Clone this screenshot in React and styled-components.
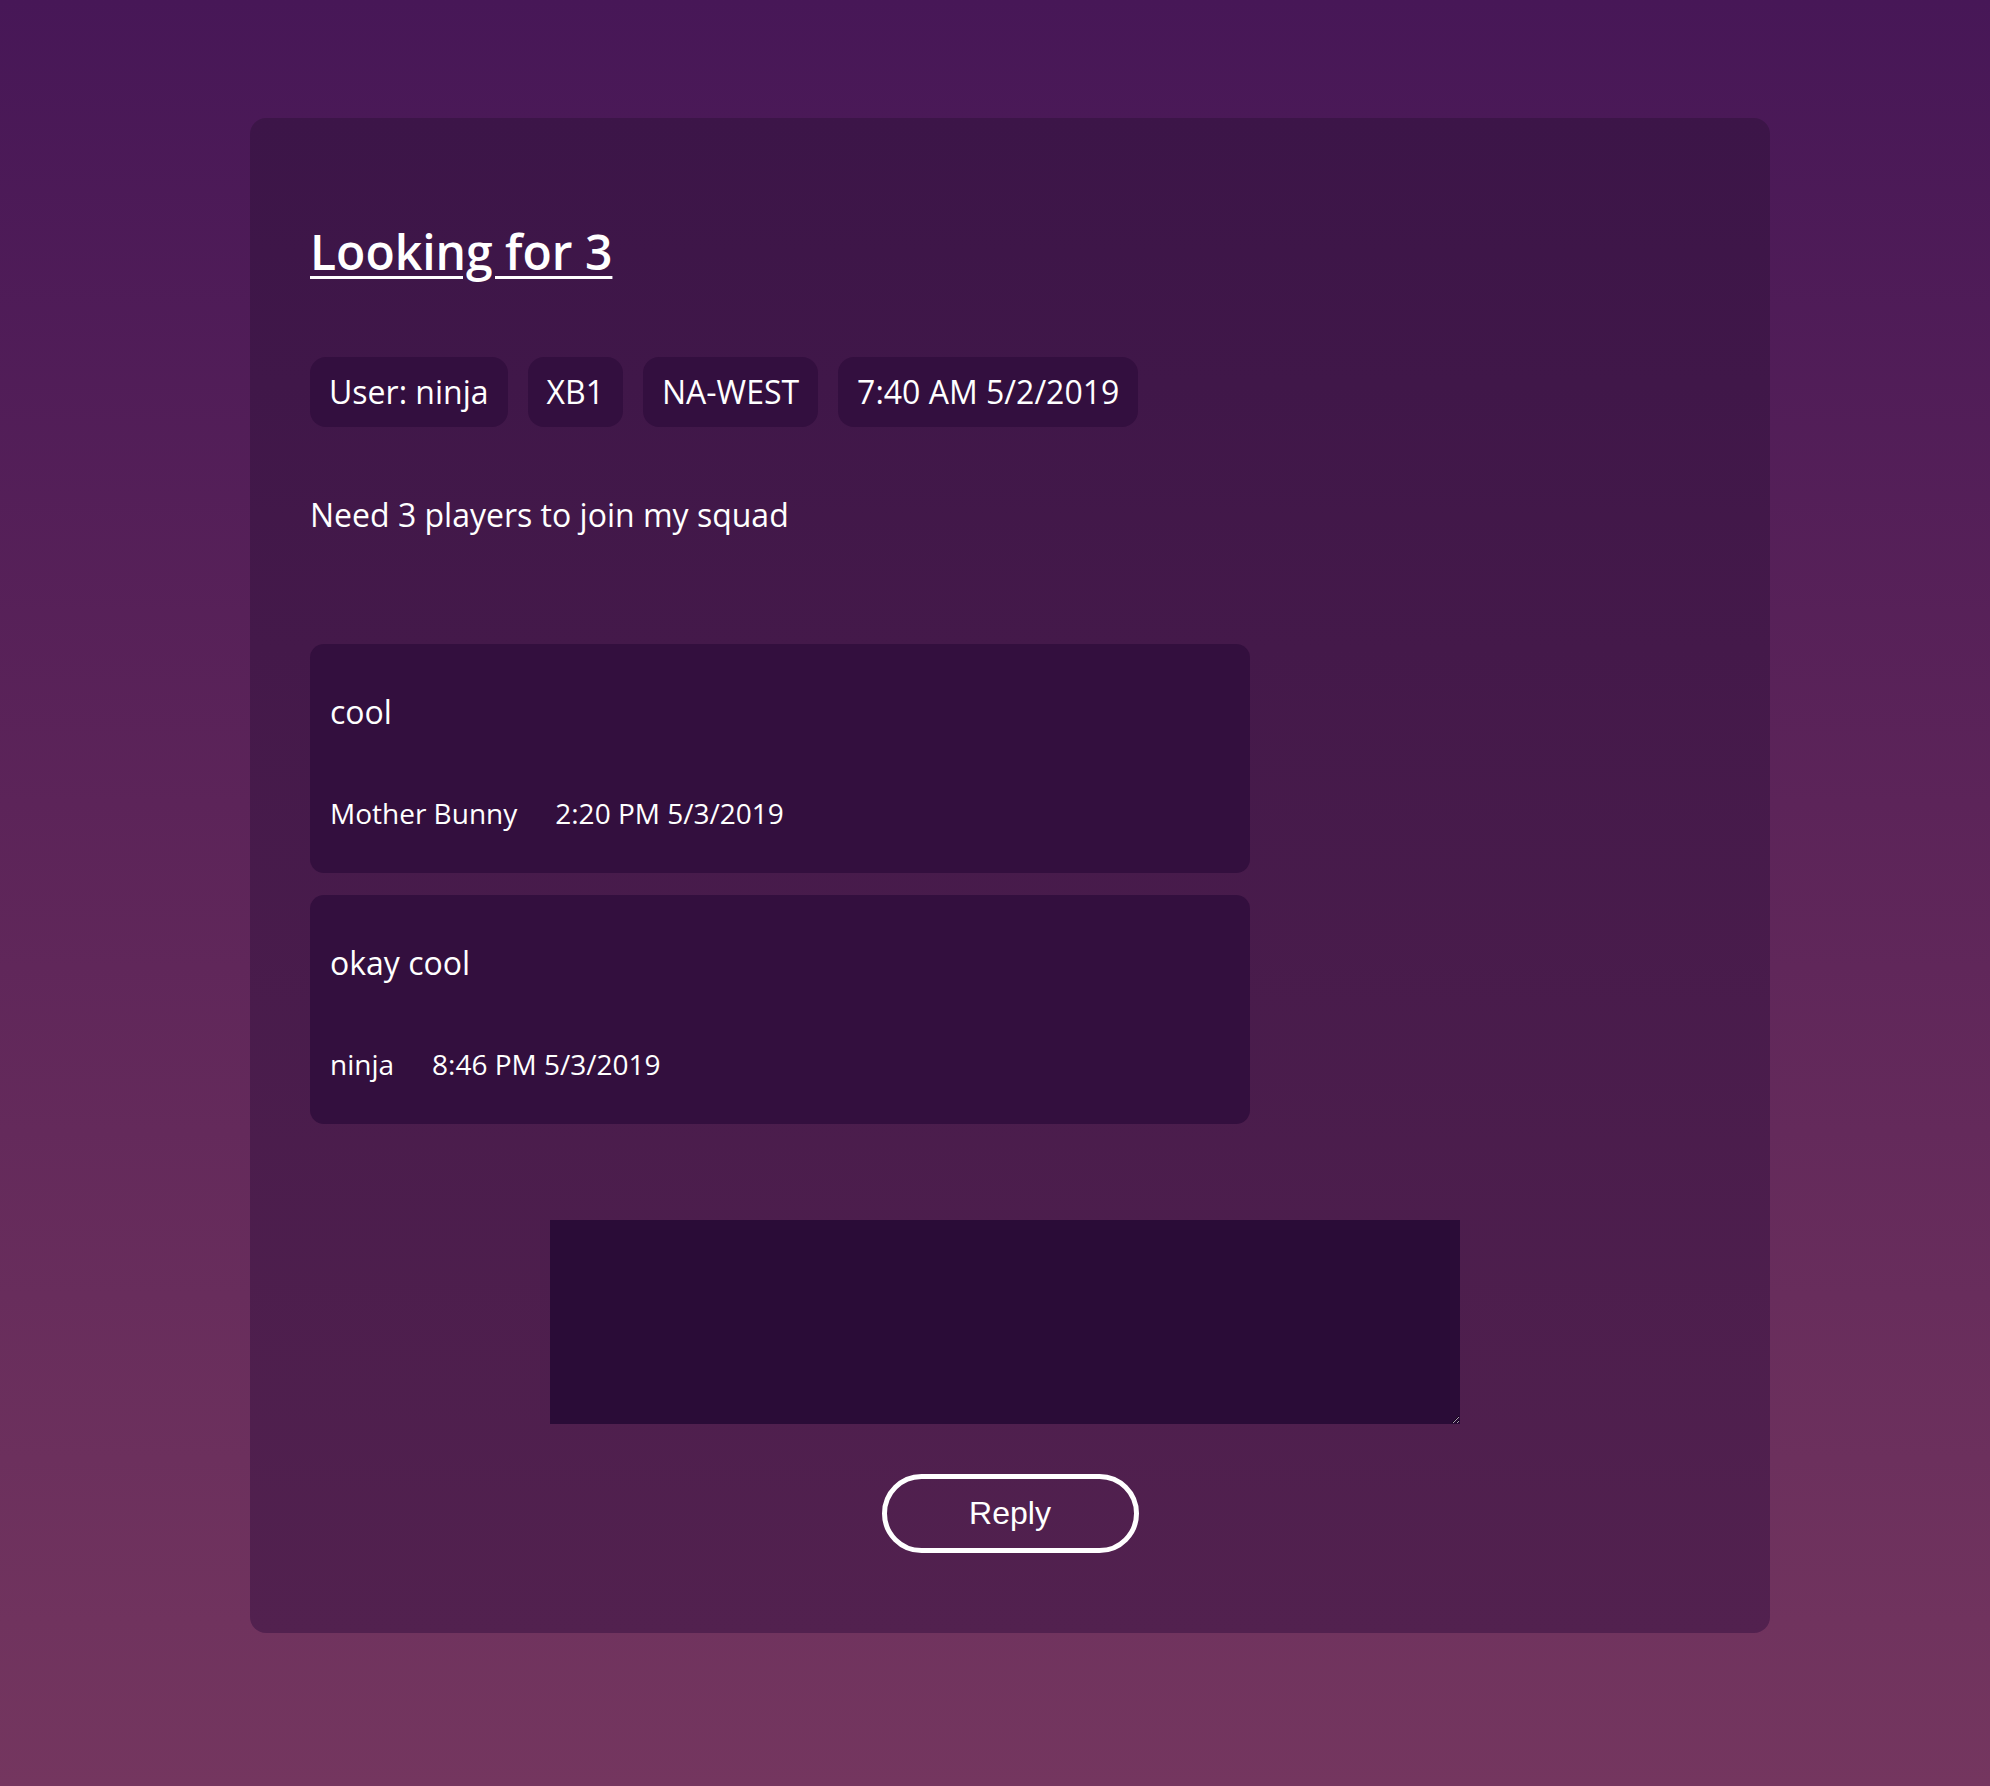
import React from "react";
import styled, { createGlobalStyle } from "styled-components";

const GlobalStyle = createGlobalStyle`
  html, body {
    margin: 0;
    padding: 0;
  }
  body {
    min-height: 100vh;
    background: linear-gradient(to bottom, #471757 0%, #5c2459 45%, #74365f 100%);
    font-family: "Open Sans", "Noto Sans", sans-serif;
    color: #fff;
  }
`;

const Page = styled.div`
  padding: 118px 0 153px 250px;
`;

const Card = styled.article`
  width: 1520px;
  box-sizing: border-box;
  padding: 101px 60px 80px;
  border-radius: 16px;
  background: linear-gradient(to bottom, #3c1548 0%, #44194a 35%, #52214f 100%);
  display: flex;
  flex-direction: column;
`;

const Title = styled.h1`
  margin: 0;
  font-size: 48px;
  line-height: 65px;
  font-weight: 600;
  text-decoration: underline;
  text-decoration-thickness: 3px;
  text-underline-offset: 6px;
`;

const Tags = styled.div`
  display: flex;
  gap: 20px;
  margin-top: 73px;
`;

const Tag = styled.span`
  background: #330f3f;
  border-radius: 16px;
  padding: 13px 19px;
  font-size: 32px;
  line-height: 44px;
`;

const Description = styled.p`
  margin: 66px 0 0;
  font-size: 32px;
  line-height: 44px;
`;

const Comments = styled.div`
  display: flex;
  flex-direction: column;
  gap: 22px;
  margin-top: 107px;
`;

const Comment = styled.div`
  width: 940px;
  box-sizing: border-box;
  background: #330f3e;
  border-radius: 14px;
  padding: 46px 20px 41px;
`;

const CommentText = styled.p`
  margin: 0;
  font-size: 32px;
  line-height: 44px;
`;

const Meta = styled.div`
  margin-top: 60px;
  font-size: 28px;
  line-height: 38px;
  display: flex;
  gap: 38px;
`;

const ReplyForm = styled.form`
  display: flex;
  flex-direction: column;
  align-items: center;
  margin-top: 96px;
`;

const TextArea = styled.textarea`
  width: 910px;
  height: 204px;
  box-sizing: border-box;
  margin-right: 10px;
  border: none;
  outline: none;
  background: #2a0c37;
  color: #fff;
  color-scheme: dark;
  font-size: 28px;
  font-family: "Open Sans", sans-serif;
`;

const ReplyButton = styled.button`
  margin-top: 50px;
  width: 257px;
  height: 79px;
  box-sizing: border-box;
  border: 5px solid #fff;
  border-radius: 40px;
  background: transparent;
  color: #fff;
  font-family: "Liberation Sans", Arial, sans-serif;
  font-size: 32px;
  cursor: pointer;
`;

const post = {
  title: "Looking for 3",
  tags: ["User: ninja", "XB1", "NA-WEST", "7:40 AM 5/2/2019"],
  body: "Need 3 players to join my squad",
  replies: [
    { text: "cool", author: "Mother Bunny", time: "2:20 PM 5/3/2019" },
    { text: "okay cool", author: "ninja", time: "8:46 PM 5/3/2019" },
  ],
};

const App = () => (
  <Page>
    <GlobalStyle />
    <Card>
      <Title>{post.title}</Title>
      <Tags>
        {post.tags.map((t) => (
          <Tag key={t}>{t}</Tag>
        ))}
      </Tags>
      <Description>{post.body}</Description>
      <Comments>
        {post.replies.map((r) => (
          <Comment key={r.time}>
            <CommentText>{r.text}</CommentText>
            <Meta>
              <span>{r.author}</span>
              <span>{r.time}</span>
            </Meta>
          </Comment>
        ))}
      </Comments>
      <ReplyForm onSubmit={(e) => e.preventDefault()}>
        <TextArea />
        <ReplyButton type="submit">Reply</ReplyButton>
      </ReplyForm>
    </Card>
  </Page>
);

export default App;
